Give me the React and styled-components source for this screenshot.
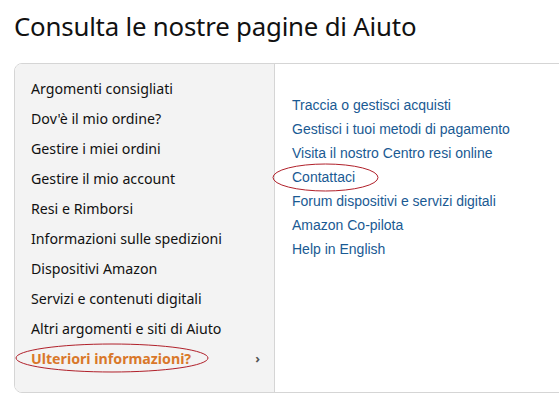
import React from 'react'
import styled, { createGlobalStyle } from 'styled-components'

const GlobalStyle = createGlobalStyle`
  body {
    margin: 0;
    background: #fff;
    overflow: hidden;
  }
`

const Page = styled.div`
  width: 559px;
  height: 404px;
  padding: 8px 0 0 14px;
  box-sizing: border-box;
  font-family: "Noto Sans", Arial, sans-serif;
`

const Title = styled.h1`
  margin: 0;
  font-size: 25.8px;
  font-weight: 400;
  line-height: 36px;
  color: #111;
  letter-spacing: -0.2px;
`

const Panel = styled.div`
  margin-top: 19px;
  width: 560px;
  height: 330px;
  display: flex;
  border: 1px solid #d5d5d5;
  border-radius: 8px;
  overflow: hidden;
  box-sizing: border-box;
`

const Sidebar = styled.ul`
  list-style: none;
  margin: 0;
  padding: 9px 0 0;
  width: 259px;
  background: #f3f3f3;
  border-right: 1px solid #d5d5d5;
  flex-shrink: 0;
`

const SideItem = styled.li`
  position: relative;
  height: 30px;
  display: flex;
  align-items: center;
  justify-content: space-between;
  padding: 0 14px 0 16px;
  font-size: 14.2px;
  color: ${p => (p.$active ? '#d9782a' : '#111')};
  font-weight: ${p => (p.$active ? 700 : 400)};
`

const Chevron = styled.span`
  font-size: 13px;
  color: #555;
  font-weight: 700;
`

const LinkList = styled.ul`
  list-style: none;
  margin: 0;
  padding: 29px 0 0 17px;
  font-family: "Liberation Sans", Arial, sans-serif;
`

const LinkItem = styled.li`
  position: relative;
  height: 24px;
  line-height: 24px;
  font-size: 14px;
  color: #1a5a93;
`

const Mark = styled.svg`
  position: absolute;
  pointer-events: none;
  left: ${p => p.$left}px;
  top: ${p => p.$top}px;
`

const Ellipse = ({ left, top, w, h }) => (
  <Mark $left={left} $top={top} width={w} height={h} viewBox={`0 0 ${w} ${h}`}>
    <ellipse cx={w / 2} cy={h / 2} rx={w / 2 - 1} ry={h / 2 - 1} fill="none" stroke="#b0202a" strokeWidth="1" />
  </Mark>
)

const topics = [
  'Argomenti consigliati',
  "Dov'è il mio ordine?",
  'Gestire i miei ordini',
  'Gestire il mio account',
  'Resi e Rimborsi',
  'Informazioni sulle spedizioni',
  'Dispositivi Amazon',
  'Servizi e contenuti digitali',
  'Altri argomenti e siti di Aiuto',
]

const links = [
  'Traccia o gestisci acquisti',
  'Gestisci i tuoi metodi di pagamento',
  'Visita il nostro Centro resi online',
  'Contattaci',
  'Forum dispositivi e servizi digitali',
  'Amazon Co-pilota',
  'Help in English',
]

export default function App() {
  return (
    <Page>
      <GlobalStyle />
      <Title>Consulta le nostre pagine di Aiuto</Title>
      <Panel>
        <Sidebar>
          {topics.map(t => (
            <SideItem key={t}>{t}</SideItem>
          ))}
          <SideItem $active>
            Ulteriori informazioni?
            <Chevron>›</Chevron>
            <Ellipse left={0} top={0} w={194} h={30} />
          </SideItem>
        </Sidebar>
        <LinkList>
          {links.map(l => (
            <LinkItem key={l}>
              {l}
              {l === 'Contattaci' && <Ellipse left={-20} top={-2} w={107} h={29} />}
            </LinkItem>
          ))}
        </LinkList>
      </Panel>
    </Page>
  )
}
